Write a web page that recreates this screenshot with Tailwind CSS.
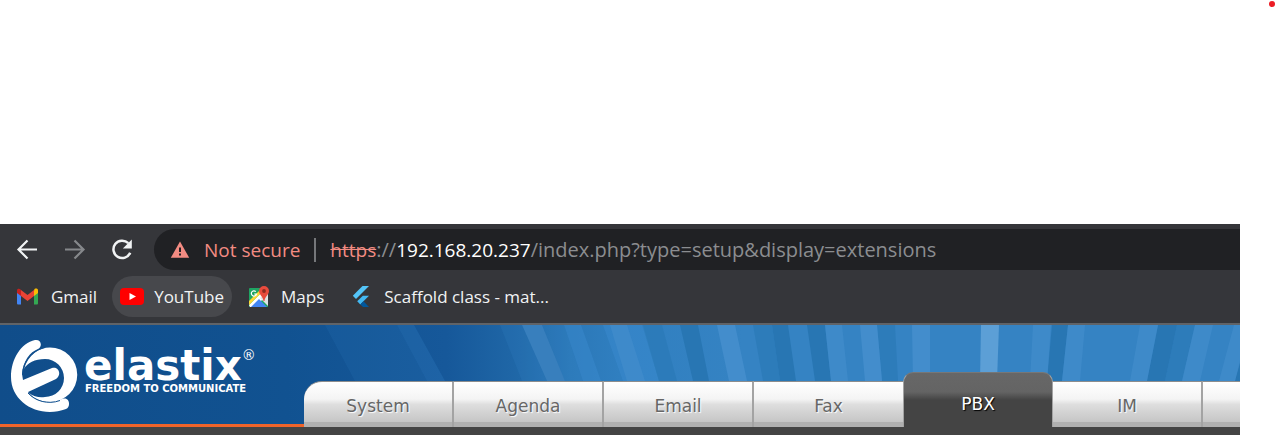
<!DOCTYPE html>
<html lang="en">
<head>
<meta charset="utf-8">
<meta name="viewport" content="width=device-width, initial-scale=1">
<title>Elastix</title>
<script src="https://cdn.jsdelivr.net/npm/@tailwindcss/browser@4"></script>
</head>
<body class="bg-white">
<div class="flex h-56 items-start justify-end p-px" aria-hidden="true">
  <span class="size-1.5 rounded-full bg-[#ec1c24]"></span>
</div>

<div class="mr-9 overflow-hidden font-['Open_Sans','Noto_Sans',sans-serif]">
  <!-- Browser toolbar -->
  <div class="border-b-2 border-[#606367] bg-[#35363a] pt-[5px] pb-1.5">
    <div class="flex items-center">
      <div class="flex items-center gap-[23px] pr-5 pl-4">
        <button type="button" aria-label="Back" class="text-[#f1f3f4]">
          <svg class="size-6" viewBox="0 0 24 24" fill="none" stroke="currentColor" stroke-width="2.2"><path d="M21 11.500H3M11.500 2.500l-9 9 9 9"/></svg>
        </button>
        <button type="button" aria-label="Forward" class="text-[#86888b]">
          <svg class="size-6" viewBox="0 0 24 24" fill="none" stroke="currentColor" stroke-width="2.2"><path d="M2 11.500h18M11.500 2.500l9 9-9 9"/></svg>
        </button>
        <button type="button" aria-label="Reload" class="text-[#f1f3f4]">
          <svg class="size-6" viewBox="0 0 24 24" fill="none" stroke="currentColor" stroke-width="2.500"><path d="M18.300 5.200A8.700 8.700 0 1 0 20.200 14.700"/><path d="M21.800 1.500v9h-9z" fill="currentColor" stroke="none"/></svg>
        </button>
      </div>
      <div class="flex h-[41px] min-w-0 flex-1 items-center rounded-l-full bg-[#202124] pl-4 text-xl leading-7 whitespace-nowrap">
        <button type="button" class="flex items-center gap-3.5 text-[#f28b82]">
          <svg class="h-[18px] w-5" viewBox="0 0 20 18"><path d="M10 0.500 19.200 16.800H.8z" fill="#f28b82"/><path d="M9 6.500h2v4.500H9zM9 12.500h2v2H9z" fill="#202124"/></svg>
          <span class="text-[19px]">Not secure</span>
        </button>
        <span class="mx-3.5 h-6 w-0.5 bg-[#75777a]"></span>
        <div role="textbox" contenteditable="true" aria-label="Address" class="text-[#8b8d90] outline-none"><span class="text-[19px] text-[#f28b82] line-through">https</span>://<span class="text-[19px] text-white">192.168.20.237</span>/index.php?type=setup&amp;display=extensions</div>
      </div>
    </div>
    <nav aria-label="Bookmarks" class="mt-1.5 flex items-center pl-2 text-[17px] leading-6 whitespace-nowrap text-[#f1f3f4]">
      <a href="#" class="flex h-[41px] items-center gap-3 rounded-full pr-[7px] pl-2">
        <svg class="h-[17px] w-[23px]" viewBox="0 0 23 17"><path d="M1 3v12.500q0 1 1 1h3V6z" fill="#4285f4"/><path d="M22 3v12.500q0 1-1 1h-3V6z" fill="#34a853"/><path d="M18 2.500V8l4-3V2.500C22 .5 20 0 18.500 1z" fill="#fbbc04"/><path d="M5 2v6l6.500 5L18 8V2l-6.500 5z" fill="#ea4335"/><path d="M1 2.500V5l4 3V2C3.500 0 1 .5 1 2.500z" fill="#c5221f"/></svg>
        <span>Gmail</span>
      </a>
      <a href="#" class="ml-2 flex h-[41px] items-center gap-2.5 rounded-full bg-[#47484c] pr-2 pl-2">
        <svg class="h-[17px] w-6" viewBox="0 0 24 17"><rect width="24" height="17" rx="4" fill="#f00"/><path d="M9.500 5v7l6.500-3.500z" fill="#fff"/></svg>
        <span>YouTube</span>
      </a>
      <a href="#" class="flex h-[41px] items-center gap-2.5 pl-4">
        <svg class="h-[22px] w-[23px]" viewBox="0 0 23 22"><path d="M2 2h18v19H2q-1 0-1-1V3q0-1 1-1z" fill="#1fa463"/><path d="M1 19 17 3l3 2v3L7 21H2z" fill="#fff"/><path d="M1 15 13 3h4L1 19z" fill="#fdd835"/><path d="M3 21l8-8 8 8z" fill="#4285f4"/><path d="M12 12l8-6v14z" fill="#dfe3e6"/><path d="M7.800 5.600A2.600 2.600 0 1 0 8.500 8H6.200" fill="none" stroke="#fff" stroke-width="1.200"/><path d="M16 0a5 5 0 0 1 5 5c0 4-4 5-4.500 10h-1C15 10 11 9 11 5a5 5 0 0 1 5-5z" fill="#e84b3d"/><circle cx="16" cy="5" r="1.900" fill="#8f2c22"/></svg>
        <span>Maps</span>
      </a>
      <a href="#" class="ml-3 flex h-[41px] items-center gap-3.5 pl-4">
        <svg class="h-[22px] w-[18px]" viewBox="0 0 18 22"><path d="M10.500 0H17L4 13 .8 9.800z" fill="#54c5f8"/><path d="M10.800 9.800H17L11.500 15.300 8.300 18.400 5.200 15.300z" fill="#43b9f3"/><path d="M8.300 18.400 11.500 15.300 17 21h-6z" fill="#01579b"/></svg>
        <span>Scaffold class - mat...</span>
      </a>
    </nav>
  </div>

  <!-- Application header -->
  <header class="relative flex h-[102px] items-end bg-[#115190] font-['DejaVu_Sans',sans-serif]">
    <svg class="absolute inset-0 size-full" viewBox="0 0 1240 102" preserveAspectRatio="xMinYMin slice" aria-hidden="true">
      <defs>
        <linearGradient id="sky" x2="1240" gradientUnits="userSpaceOnUse"><stop offset="0" stop-color="#104d8a"/><stop offset=".23" stop-color="#115291"/><stop offset=".36" stop-color="#16589a"/><stop offset=".42" stop-color="#2068a8"/><stop offset=".46" stop-color="#2b78b8"/><stop offset=".5" stop-color="#307fc0"/><stop offset=".6" stop-color="#3583c3"/><stop offset="1" stop-color="#3583c3"/></linearGradient>
      </defs>
      <path fill="url(#sky)" d="M0 0h1240v102H0z"/>
      <g fill="#3b8bd0">
        <path opacity=".12" d="M345 0h52l30 56h-50zM325 0h72l30 56h-72z"/>
        <path opacity=".22" d="M397 0h17l31 56h-18z"/>
        <path opacity=".15" d="M500 0h22l25 56h-25zM542 0h22l19 56h-18z"/>
        <path opacity=".45" d="M564 0h17l20 56h-18zM603 0h39l17 56h-36z"/>
      </g>
      <path fill="#387fbd" d="M522 0h20l23 56h-18z"/>
      <g fill="#2b7ab7">
        <path d="M643 0h19l15 56h-18zM753 0h19l8 56h-17zM877 0h18l3 56h-16zM1177 0h18l-13 56h-17z" opacity=".75"/>
        <path fill="#2876b3" d="M680 0h18l11 56h-16zM772 0h16l8 56h-16zM807 0h18l6 56h-16zM1052 0h16l-6 56h-15zM1158 0h19l-12 56h-18zM1240 35v21h-5z"/>
      </g>
      <g fill="#438dcc">
        <path d="M717 0h18l12 56h-18zM860 0h17l5 56h-17zM912 0h18v56h-17z"/>
        <path opacity=".65" d="M610 0h17l18 56h-18zM825 0h17l6 56h-17zM1033 0h18l-4 56h-17zM1068 0h17l-5 56h-18zM1140 0h18l-11 56h-17zM1195 0h18l-13 56h-18zM1234 0h6v38l-5 18h-16z"/>
      </g>
      <path fill="#5c9fd6" d="M981 0h18l-2 56h-17z"/>
    </svg>

    <div class="relative flex h-full w-[304px] shrink-0 items-start border-b-3 border-[#f0642a] pt-3.5 pl-2.5 text-white">
      <svg class="h-[76px] w-[68px] shrink-0" viewBox="0 0 68 76" role="img" aria-label="Elastix">
        <path fill="#fff" d="M25 1C31 0 33 7 28 10 20 13 13 22 12 35L13 41 42 29C49 27 52 36 46 40L18 53C24 62 37 66 52 60 60 57 61 68 56 70 30 80 1 64 1 38 1 20 11 4 25 1z"/>
        <path fill="#fff" d="M14 30C18 16 29 8.500 40 8.500a27 27 0 0 1 0 54.500C32 63 24 60 19 54 24 58 30 59 35 58A19 19 0 0 0 35 20C25 20 17 24 14 30z"/>
        <path fill="none" stroke="#115190" stroke-width="1" d="M12.500 36C13 22 22 12 34 8.500M18 54C25 62 38 66 50 61.500"/>
      </svg>
      <div class="flex flex-col pt-1.5 pl-1.5 font-bold">
        <div class="flex items-start">
          <span class="pt-1 text-[42px] leading-[34px]">elastix</span>
          <span class="pt-0.5 text-sm leading-4 font-normal">®</span>
        </div>
        <span class="pl-px text-[10px] leading-3 whitespace-nowrap">FREEDOM TO COMMUNICATE</span>
      </div>
    </div>

    <nav aria-label="Modules" class="relative flex min-w-0 flex-1 items-end overflow-hidden text-[17px] leading-6 text-[#666]">
      <a href="#" class="flex h-[46px] w-[150px] shrink-0 items-center justify-center rounded-tl-[18px] border-t border-r-2 border-t-[#8d8d8d] border-r-[#a3a3a3] bg-linear-[to_bottom,#fff_0%,#f4f4f4_38%,#dedede_50%,#c6c6c6_88%,#b0b0b0_89%,#b0b0b0_100%] pt-0.5 [text-shadow:1px_1px_1px_#fff]">System</a>
      <a href="#" class="flex h-[46px] w-[150px] shrink-0 items-center justify-center border-t border-r-2 border-t-[#8d8d8d] border-r-[#a3a3a3] bg-linear-[to_bottom,#fff_0%,#f4f4f4_38%,#dedede_50%,#c6c6c6_88%,#b0b0b0_89%,#b0b0b0_100%] pt-0.5 [text-shadow:1px_1px_1px_#fff]">Agenda</a>
      <a href="#" class="flex h-[46px] w-[150px] shrink-0 items-center justify-center border-t border-r-2 border-t-[#8d8d8d] border-r-[#a3a3a3] bg-linear-[to_bottom,#fff_0%,#f4f4f4_38%,#dedede_50%,#c6c6c6_88%,#b0b0b0_89%,#b0b0b0_100%] pt-0.5 [text-shadow:1px_1px_1px_#fff]">Email</a>
      <a href="#" class="flex h-[46px] w-[149px] shrink-0 items-center justify-center border-t border-t-[#8d8d8d] bg-linear-[to_bottom,#fff_0%,#f4f4f4_38%,#dedede_50%,#c6c6c6_88%,#b0b0b0_89%,#b0b0b0_100%] pt-0.5 [text-shadow:1px_1px_1px_#fff]">Fax</a>
      <a href="#" aria-current="page" class="flex h-[55px] w-[150px] shrink-0 items-center justify-center rounded-t-[10px] border-x border-t border-x-[#a3a3a3] border-t-[#777] bg-linear-[to_bottom,#676767_0%,#646464_35%,#444_50%] pt-2 text-white [text-shadow:1px_1px_1px_#000]">PBX</a>
      <a href="#" class="flex h-[46px] w-[150px] shrink-0 items-center justify-center border-t border-r-2 border-t-[#8d8d8d] border-r-[#a3a3a3] bg-linear-[to_bottom,#fff_0%,#f4f4f4_38%,#dedede_50%,#c6c6c6_88%,#b0b0b0_89%,#b0b0b0_100%] pt-0.5 [text-shadow:1px_1px_1px_#fff]">IM</a>
      <span class="h-[46px] flex-1 border-t border-t-[#8d8d8d] bg-linear-[to_bottom,#fff_0%,#f4f4f4_38%,#dedede_50%,#c6c6c6_88%,#b0b0b0_89%,#b0b0b0_100%]"></span>
    </nav>
  </header>
  <div class="h-2 bg-[#444]"></div>
</div>
</body>
</html>
